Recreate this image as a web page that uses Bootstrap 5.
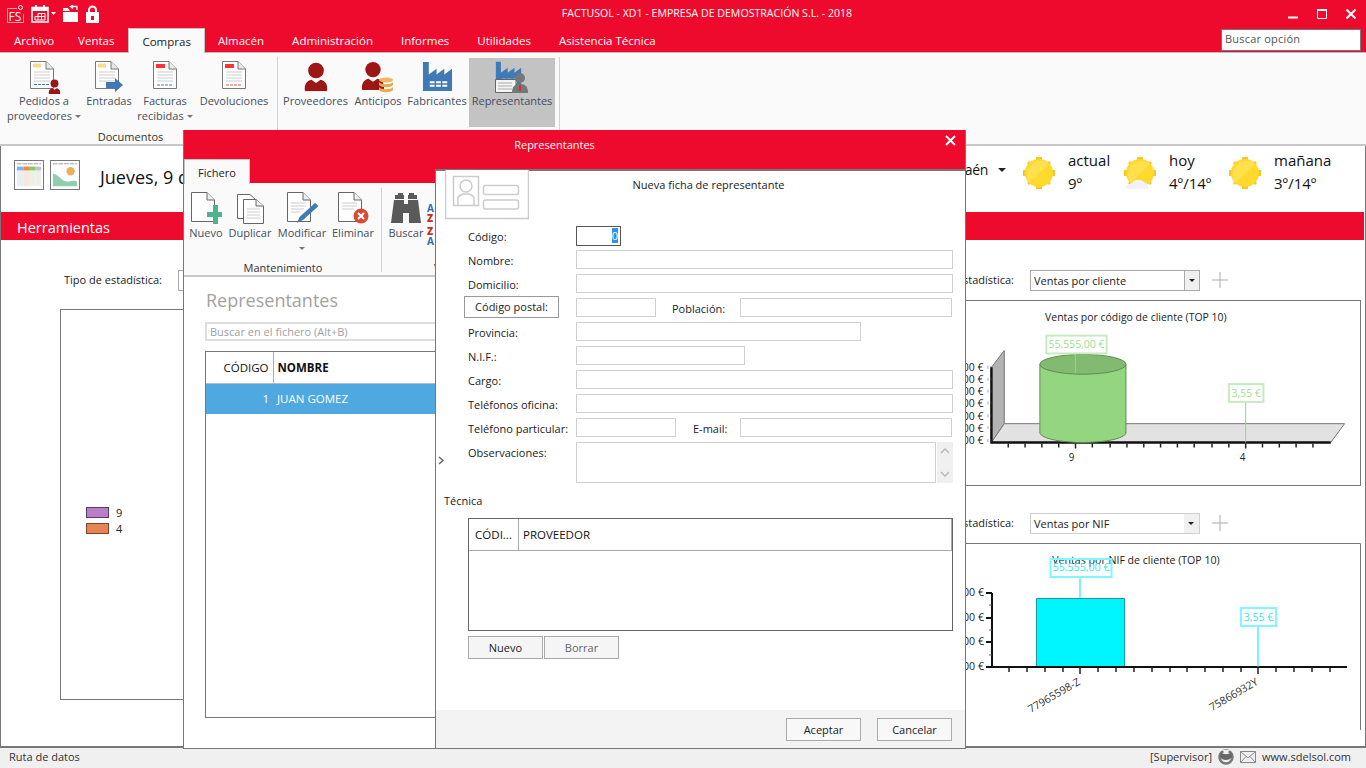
<!DOCTYPE html>
<html lang="es">
<head>
  <meta charset="UTF-8">
  <title>FACTUSOL</title>
  <link href="https://cdn.jsdelivr.net/npm/bootstrap@5.3.0/dist/css/bootstrap.min.css" rel="stylesheet">
  <style>
    html, body { width: 1366px; height: 768px; overflow: hidden; }
    body { font-family: "Open Sans", "Noto Sans", sans-serif; font-size: 11px; color: #222; background: #fff; position: relative; }
    /* title bar and tabs */
    .app-red { background: #ee0a2c; color: #fff; }
    .title-row { height: 28px; }
    .title-left { width: 200px; padding: 5px 0 0 7px; gap: 7px; }
    .title-right { width: 152px; padding-right: 10px; gap: 19px; }
    .title-text { font-size: 10.6px; }
    .tab-row { height: 25px; border-bottom: 1px solid #bdbdbd; }
    .tab-item { padding: 0 14px; height: 24px; line-height: 26px; font-size: 11.5px; color: #fff; }
    .tab-first { margin-right: -4px; }
    .tab-on { background: #fafafa; color: #222; border: 1px solid #c4c4c4; border-bottom: 0; height: 25px; margin-right: -1px; padding: 0 13px; }
    .quick-find { width: 140px; height: 22px; margin: 1px 5px 0 auto; background: #fff; border: 1px solid #777; color: #555; padding: 1px 3px; line-height: 16px; letter-spacing: .2px; }
    /* ribbon */
    .ribbon { height: 93px; background: #fafafa; border-bottom: 2px solid #c8c8c8; }
    .rb-group { position: relative; height: 90px; padding: 5px 0 0 4px; }
    .rb-group-a { width: 277px; }
    .rb-group-b { width: 283px; padding-left: 2px; border-left: 1px solid #d2d2d2; border-right: 1px solid #d2d2d2; height: 86px; margin-top: 4px; padding-top: 1px; }
    .rb-btn { height: 69px; text-align: center; color: #454e5c; line-height: 15px; }
    .rb-btn svg { display: block; margin: 0 auto; }
    .rb-lbl { text-align: center; font-size: 11px; color: #333; line-height: 14px; }
    .rb-cap { position: absolute; left: 0; right: 0; top: 77px; }
    .rb-sel { background: #c3c3c3; }
    .ico-box { height: 35px; padding-top: 3px; }
    .caret-s { display: inline-block; border: 3px solid transparent; border-top: 3px solid #777; border-bottom: 0; vertical-align: 2px; margin-left: 3px; }
    .w80 { width: 80px; } .w50 { width: 50px; } .w62 { width: 62px; } .w76 { width: 76px; }
    .w71 { width: 71px; } .w54 { width: 54px; } .w64 { width: 64px; } .w86 { width: 86px; }
    .w44 { width: 44px; } .w60 { width: 60px; } .w42 { width: 42px; }
    /* background page */
    .page-body { height: 602px; border: solid #777; border-width: 0 1px 2px 1px; overflow: hidden; background: #fff; }
    .info-row { height: 66px; padding: 14px 10px 0 13px; }
    .thumb { width: 30px; height: 30px; border: 1px solid #777; margin-right: 6px; display: block; }
    .today { font-size: 18px; margin-left: 14px; line-height: 34px; color: #111; }
    .place { font-size: 14px; letter-spacing: -.3px; line-height: 30px; margin: -5px 16px 0 0; color: #111; }
    .caret-b { display: inline-block; border: 4px solid transparent; border-top: 4px solid #222; border-bottom: 0; vertical-align: 3px; margin-left: 10px; }
    .sun-ico { margin-top: -4px; flex: none; }
    .weather-txt { font-size: 15px; line-height: 23px; margin: -11px 0 0 12px; color: #111; }
    .wt-a { width: 55px; } .wt-b { width: 59px; } .wt-c { width: 81px; }
    .band { height: 28px; line-height: 31px; padding-left: 16px; background: #ee0a2c; color: #fff; font-size: 14.5px; margin-right: 1px; }
    .stats { display: grid; grid-template-columns: 640px 661px; padding: 30px 0 0 59px; }
    .combo-row { height: 30px; gap: 16px; justify-content: flex-end; }
    .stat-left .combo-row { justify-content: flex-start; padding-left: 4px; }
    .combo { width: 170px; height: 21px; border: 1px solid #aaa; padding-left: 3px; line-height: 20px; background: #fff; color: #222; }
    .combo-arrow { width: 15px; height: 19px; margin-left: auto; background: #f0f0f0; border-left: 1px solid #aaa; padding: 8px 0 0 4px; line-height: 0; }
    .combo-soft { border-color: #d0d0d0; }
    .combo-soft .combo-arrow { border-left: 0; }
    .stat-lbl { line-height: 20px; }
    .chart-box { border: 1px solid #777; display: block; }
    .chart-l { height: 391px; padding: 195px 0 0 25px; line-height: 16px; margin-top: 9px; }
    .plus-ico { margin: 2px 133px 0 -4px; }
    .sw { display: inline-block; width: 23px; height: 11px; border: 1px solid #5a3a66; background: #b87fc8; margin-right: 7px; vertical-align: -1px; }
    .sw-o { border-color: #7a4528; background: #e58553; }
    .gap-r { height: 27px; }
    /* status bar */
    .status { height: 20px; background: #f0f0f0; padding: 0 15px 2px 9px; line-height: 18px; color: #333; }
    .st-g { margin-left: 6px; }
    /* windows */
    .win-list { position: absolute; left: 183px; top: 130px; width: 783px; height: 619px; background: #fff; border: 1px solid #777; border-top: 0; }
    .win-head { height: 53px; background: #ee0a2c; color: #fff; text-align: center; line-height: 30px; position: relative; padding-right: 40px; }
    .win-x { position: absolute; right: 9px; top: 5px; }
    .sub-tab { position: absolute; left: 0; top: 29px; width: 66px; height: 25px; background: #fafafa; border: 1px solid #c4c4c4; border-bottom: 0; color: #222; line-height: 25px; text-align: center; z-index: 2; }
    .rb-sub { height: 94px; background: #fafafa; border-bottom: 2px solid #c8c8c8; padding-top: 8px; position: relative; }
    .sub-div { width: 1px; height: 84px; background: #d2d2d2; margin: -3px 3px 0 7px; }
    .sub-btn { height: 64px; text-align: center; color: #454e5c; line-height: 15px; }
    .sub-btn svg { display: block; margin: 0 auto 1px; }
    .sub-cap { position: absolute; top: 77px; left: 0; width: 198px; text-align: center; color: #333; }
    .sub-cap2 { position: absolute; top: 77px; left: 250px; color: #333; }
    .az { font-size: 10px; font-weight: 700; line-height: 10px; padding-top: 12px; color: #2f6fb0; }
    .az b { color: #c9301c; display: block; }
    .az-gap { margin-top: 3px; }
    .list-title { font-size: 18px; color: #a2a2a2; margin: 11px 0 0 22px; line-height: 24px; }
    .search-f { margin: 10px 0 0 21px; width: 300px; height: 19px; border: 2px solid #ddd; border-radius: 0; color: #a0a0a8; padding: 0 3px; line-height: 15px; font-size: 11px; }
    .search-f::placeholder { color: #a0a0a8; }
    .grid-wrap { margin: 10px 0 0 21px; width: 300px; height: 367px; border: 1px solid #777; }
    .grid-wrap .table { font-size: 11.5px; margin: 0; }
    .grid-wrap th, .grid-wrap td { padding: 0 4px; height: 31px; vertical-align: middle; border-bottom: 1px solid #bbb; font-weight: 400; color: #111; }
    .grid-wrap th.fw-bold { font-weight: 700; }
    .col-code { width: 67px; text-align: right; border-right: 1px solid #aaa; }
    .row-on td { background: #4fa8e0; color: #fff; border-bottom: 0; box-shadow: none; }
    .win-form { position: absolute; left: 435px; top: 169px; width: 531px; height: 580px; background: #fff; border: 1px solid #777; border-top: 2px solid #777; }
    .id-card { position: absolute; left: 9px; top: -1px; }
    .form-title { text-align: center; padding: 6px 0 0 16px; line-height: 16px; height: 55px; font-size: 11px; color: #222; }
    .f-area { padding-left: 32px; }
    .f-row { height: 24px; align-items: flex-start; }
    .f-row label { width: 108px; padding-top: 3px; color: #222; line-height: 16px; flex: none; }
    .f-row .form-control { height: 19px; border: 1px solid #d0d0d0; border-radius: 0; padding: 0 2px; font-size: 11px; box-shadow: none; }
    .f-row .code-in { width: 45px; border-color: #555; text-align: right; height: 20px; line-height: 18px; }
    .hl { background: #3390e8; color: #fff; }
    .f-w-full { width: 377px; }
    .f-w80 { width: 80px; }
    .f-w285 { width: 285px; }
    .f-w169 { width: 169px; }
    .f-w100 { width: 100px; }
    .f-w212 { width: 212px; }
    .f-lbl2 { padding: 3px 0 0 16px; width: 84px; line-height: 16px; flex: none; }
    .f-lbl3 { padding: 3px 0 0 17px; width: 64px; line-height: 16px; flex: none; }
    .cp-btn { width: 95px; height: 22px; margin: -2px 17px 0 -4px; padding: 0; border: 1px solid #999; border-radius: 0; background: #fff; color: #222; font-size: 11px; line-height: 20px; }
    .f-row .memo { width: 360px; height: 41px; resize: none; flex: none; }
    .memo-bar { width: 16px; height: 41px; background: #f0f0f0; margin-left: 1px; padding: 6px 3px; }
    .memo-row { height: 51px; }
    .sect { padding-left: 8px; line-height: 16px; }
    .grid2 { margin: 9px 0 0 32px; width: 485px; height: 113px; border: 1px solid #666; }
    .grid2-head { height: 32px; border-bottom: 1px solid #aaa; font-size: 11.5px; line-height: 31px; color: #111; border-right: 1px solid #aaa; }
    .g2-a { width: 50px; text-align: center; border-right: 1px solid #aaa; }
    .g2-b { padding-left: 4px; }
    .btn-flat { width: 75px; height: 23px; padding: 0; border: 1px solid #aaa; border-radius: 0; background: #f5f5f5; color: #222; font-size: 11px; line-height: 21px; }
    .btn-flat:disabled { opacity: 1; color: #666; background: #f5f5f5; border-color: #aaa; }
    .sub-btns { margin: 5px 0 0 32px; gap: 1px; }
    .form-foot { position: absolute; left: 0; right: 0; bottom: 0; height: 38px; background: #f3f3f3; padding: 8px 13px 0 0; gap: 16px; justify-content: flex-end; }
    .form-foot .btn-flat { width: 75px; background: #f8f8f8; }
    .side-arrow { position: absolute; left: 2px; top: 285px; }
  </style>
</head>
<body>
  <svg width="0" height="0" class="position-absolute">
    <defs>
      <symbol id="doc-lines" viewBox="0 0 24 28">
        <path d="M.5.5H16L23.5 8V27.5H.5Z" fill="#fff" stroke="#777"/>
        <path d="M16 .5V8H23.5" fill="#e9e9e9" stroke="#777"/>
        <path d="M4 11H20M4 14H20M4 17H20M4 20H20" stroke="#ccc"/>
      </symbol>
      <symbol id="person" viewBox="0 0 26 32">
        <circle cx="13" cy="9.500" r="8.500" fill="#9c1616"/>
        <path d="M1 32C0 24 3 21 8 19.500L13 23L18 19.500C23 21 26 24 25 32Z" fill="#9c1616"/>
      </symbol>
      <symbol id="factory" viewBox="0 0 32 32">
        <path d="M1 1H7V14L15 8V14L23 8V14L31 8V31H1Z" fill="#3f79b6"/>
        <path d="M8 22H13M14.500 22H19.500M21 22H26M8 25.500H13M14.500 25.500H19.500M21 25.500H26" stroke="#fff" stroke-width="2"/>
      </symbol>
      <symbol id="sun" viewBox="0 0 34 34">
        <path d="M14 1H20V5H14ZM14 29H20V33H14ZM1 14H5V20H1ZM29 14H33V20H29Z" fill="#f6c42c"/>
        <path d="M5 7L7 5L10 8L8 10ZM27 5L29 7L26 10L24 8ZM5 27L8 24L10 26L7 29ZM26 24L29 27L27 29L24 26Z" fill="#f6c42c"/>
        <circle cx="17" cy="17" r="14" fill="#ffd92c"/>
        <path d="M7.500 27A14 14 0 0 1 27 7.500Z" fill="#ffe14f"/>
      </symbol>
    </defs>
  </svg>

  <header class="app-red">
    <div class="title-row d-flex align-items-center">
      <div class="title-left d-flex align-self-start align-items-start">
        <svg width="17" height="18" viewBox="0 0 17 18"><path d="M.5 3.500H10M.5 3.500V17.500H16.500V9" fill="none" stroke="#f7a0ad"/><text x="1.500" y="15.500" font-size="12" font-family="Open Sans" fill="#fff">FS</text><circle cx="13.500" cy="2.500" r="2" fill="none" stroke="#fff"/></svg>
        <svg width="25" height="18" viewBox="0 0 25 18"><path d="M1 2.500H17V17H1Z" fill="none" stroke="#fff" stroke-width="1.500"/><path d="M1 2H17V6H1ZM4 0H6V3H4ZM12 0H14V3H12Z" fill="#fff"/><path d="M7 8.500H14V15H4V11.500H14M7 8.500V15M10.500 8.500V15" fill="none" stroke="#fff"/><path d="M20 7H25L22.500 10Z" fill="#fff"/></svg>
        <svg width="16" height="18" viewBox="0 0 16 18"><path d="M0 7H15V17H0ZM0 3H5L7 6H0Z" fill="#fff"/><path d="M14 5V1.500H8M10 0L7.500 1.500L10 3.500" fill="none" stroke="#fff" stroke-width="1.300"/></svg>
        <svg width="13" height="18" viewBox="0 0 13 18"><path d="M3 8V5A3.500 3.500 0 0 1 10 5V8" fill="none" stroke="#fff" stroke-width="2"/><path fill-rule="evenodd" d="M0 7H13V18H0ZM5 11V15H8V11Z" fill="#fff"/></svg>
      </div>
      <div class="title-text flex-fill text-center">FACTUSOL - XD1 - EMPRESA DE DEMOSTRACIÓN S.L. - 2018</div>
      <div class="title-right d-flex justify-content-end align-items-center">
        <svg width="10" height="10" viewBox="0 0 10 10"><path d="M0 8.500H10" stroke="#fff" stroke-width="2"/></svg>
        <svg width="10" height="10" viewBox="0 0 10 10"><path d="M.5 1.500H9.500V9.500H.5Z" fill="none" stroke="#fff"/><path d="M0 1H10" stroke="#fff" stroke-width="2"/></svg>
        <svg width="10" height="10" viewBox="0 0 10 10"><path d="M.5.500L9.500 9.500M9.500.500L.5 9.500" stroke="#fff" stroke-width="2"/></svg>
      </div>
    </div>
    <div class="tab-row d-flex">
      <div class="tab-item tab-first">Archivo</div>
      <div class="tab-item">Ventas</div>
      <div class="tab-item tab-on">Compras</div>
      <div class="tab-item">Almacén</div>
      <div class="tab-item">Administración</div>
      <div class="tab-item">Informes</div>
      <div class="tab-item">Utilidades</div>
      <div class="tab-item">Asistencia Técnica</div>
      <div class="quick-find">Buscar opción</div>
    </div>
  </header>

  <section class="ribbon d-flex">
    <div class="rb-group rb-group-a d-flex">
      <div class="rb-btn w80">
        <div class="ico-box">
          <svg width="34" height="33" viewBox="-3 0 34 33"><use href="#doc-lines" width="24" height="28" x="0" y="0"/><path d="M3 2.500H11V6.500H3Z" fill="#fcd88c"/><path d="M4 23.500H20" stroke="#3f79b6" stroke-dasharray="3 1"/><use href="#person" x="18" y="18" width="13" height="15"/></svg>
        </div>
        Pedidos a<br>proveedores<span class="caret-s"></span>
      </div>
      <div class="rb-btn w50">
        <div class="ico-box">
          <svg width="28" height="33" viewBox="0 0 28 33"><use href="#doc-lines" width="24" height="28" x="0" y="0"/><path d="M3 2.500H11V6.500H3Z" fill="#fcd88c"/><path d="M11 21H20V17L28 24L20 31V27H11Z" fill="#3f79b6"/></svg>
        </div>
        Entradas
      </div>
      <div class="rb-btn w62">
        <div class="ico-box">
          <svg width="24" height="28" viewBox="0 0 24 28"><use href="#doc-lines" width="24" height="28"/><path d="M3 3H12V7H3Z" fill="#f33"/><path d="M4 24H20" stroke="#3f79b6" stroke-dasharray="3 1"/></svg>
        </div>
        Facturas<br>recibidas<span class="caret-s"></span>
      </div>
      <div class="rb-btn w76">
        <div class="ico-box">
          <svg width="24" height="28" viewBox="0 0 24 28"><use href="#doc-lines" width="24" height="28"/><path d="M3 3H12V7H3Z" fill="#f33"/><path d="M4 24H20" stroke="#e55" stroke-dasharray="3 1"/></svg>
        </div>
        Devoluciones
      </div>
      <div class="rb-lbl rb-cap pe-3">Documentos</div>
    </div>
    <div class="rb-group rb-group-b d-flex">
      <div class="rb-btn w71">
        <div class="ico-box"><svg width="24" height="31" viewBox="0 0 26 32"><use href="#person" width="26" height="32"/></svg></div>
        Proveedores
      </div>
      <div class="rb-btn w54">
        <div class="ico-box">
          <svg width="34" height="33" viewBox="0 0 34 33"><use href="#person" width="24" height="29"/><ellipse cx="25" cy="19" rx="7" ry="2.500" fill="#efb765"/><path d="M18 21C20 24 30 24 32 21V24C30 27 20 27 18 24ZM18 26C20 29 30 29 32 26V29C30 32 20 32 18 29Z" fill="#e8a94f"/></svg>
        </div>
        Anticipos
      </div>
      <div class="rb-btn w64">
        <div class="ico-box"><svg width="31" height="31" viewBox="0 0 32 32"><use href="#factory" width="32" height="32"/></svg></div>
        Fabricantes
      </div>
      <div class="rb-btn w86 rb-sel">
        <div class="ico-box">
          <svg width="34" height="33" viewBox="0 0 34 33"><use href="#factory" width="27" height="27" x="0" y="0"/><path d="M.5 18.500H21V31.500H.5Z" fill="#f4f4f4" stroke="#666"/><path d="M3 22H17M3 25H17M3 28H17" stroke="#aaa"/><circle cx="25" cy="17" r="5" fill="#777"/><path d="M17 32C17 25 20 23 25 23S33 25 33 32Z" fill="#777"/><path d="M25 24V30" stroke="#c33" stroke-width="2"/></svg>
        </div>
        Representantes
      </div>
    </div>
  </section>

  <main class="page-body">
    <div class="info-row d-flex align-items-start">
      <svg class="thumb" viewBox="0 0 30 30"><rect width="30" height="30" fill="#fff"/><path d="M2 3H28" stroke="#999" stroke-dasharray="5 1"/><path d="M2 6H9V27H2Z" fill="#e8eef3"/><path d="M9 6H16V27H9Z" fill="#f6e8dc"/><path d="M16 6H22V27H16Z" fill="#e9f2e4"/><path d="M22 6H28V27H22Z" fill="#eee"/><path d="M2 6H9V10H2Z" fill="#7bb7ee"/><path d="M9 6H16V10H9Z" fill="#f58a3c"/><path d="M16 6H22V10H16Z" fill="#8cc66a"/><path d="M22 6H28V10H22Z" fill="#c4c4c4"/></svg>
      <svg class="thumb" viewBox="0 0 30 30"><rect width="30" height="30" fill="#fff"/><path d="M2 3H28" stroke="#999" stroke-dasharray="5 1"/><circle cx="21" cy="11" r="4.500" fill="#e8b060"/><path d="M2 14C8 13 11 23 19 22C24 21 26 21 28 22V27H2Z" fill="#8fcdb0"/></svg>
      <div class="today">Jueves, 9 de febrero</div>
      <div class="place ms-auto">Jaén<span class="caret-b"></span></div>
      <svg class="sun-ico" width="34" height="34"><use href="#sun" width="34" height="34"/></svg>
      <div class="weather-txt wt-a">actual<br>9º</div>
      <svg class="sun-ico" width="34" height="34" viewBox="0 0 34 34"><use href="#sun" width="34" height="34"/><path d="M3 33C3 28 8 28 10 26C13 22 21 24 22 27C25 27 26 30 25 33Z" fill="#f2f2f8"/></svg>
      <div class="weather-txt wt-b">hoy<br>4º/14º</div>
      <svg class="sun-ico" width="34" height="34"><use href="#sun" width="34" height="34"/></svg>
      <div class="weather-txt wt-c">mañana<br>3º/14º</div>
    </div>
    <div class="band">Herramientas</div>
    <div class="stats">
      <div class="stat-left">
        <div class="combo-row d-flex align-items-start">
          <span class="stat-lbl">Tipo de estadística:</span>
          <div class="combo"></div>
        </div>
        <div class="chart-box chart-l">
          <div><span class="sw"></span>9</div>
          <div><span class="sw sw-o"></span>4</div>
        </div>
      </div>
      <div class="stat-right">
        <div class="combo-row d-flex align-items-start">
          <span class="stat-lbl">Tipo de estadística:</span>
          <div class="combo d-flex"><span>Ventas por cliente</span><span class="combo-arrow"><svg width="6" height="3"><path d="M0 0H6L3 3Z" fill="#222"/></svg></span></div>
          <svg class="plus-ico" width="16" height="16" viewBox="0 0 16 16"><path d="M8 0V16M0 8H16" stroke="#aaa"/></svg>
        </div>
        <svg class="chart-box" width="661" height="186" viewBox="700 300 661 186" font-family="Open Sans" font-size="10.6">
          <text x="1137" y="320" text-anchor="middle" fill="#222">Ventas por código de cliente (TOP 10)</text>
          <path d="M991 367L1004 350V424L991 443Z" fill="#b3b3b3" stroke="#777"/>
          <path d="M991 443L1004 424H1348L1334 443Z" fill="#e2e2e2" stroke="#777"/>
          <path d="M991 367V444M990 443H1334" stroke="#111" stroke-width="2.500" fill="none"/>
          <path d="M1008 444V448M1025 444V448M1042 444V448M1059 444V448M1076 444V449M1093 444V448M1111 444V448M1128 444V448M1145 444V448M1162 444V448M1179 444V448M1196 444V448M1214 444V448M1231 444V448M1248 444V449M1265 444V448M1282 444V448M1299 444V448M1316 444V448" stroke="#222" stroke-width="1.500"/>
          <path d="M987 367H991M987 379H991M987 391H991M987 403H991M987 416H991M987 428H991M987 441H991" stroke="#555" stroke-dasharray="1 2" stroke-width="3" opacity=".5"/>
          <path d="M1040 364V434C1048 446 1119 446 1127 434V364Z" fill="#93d67f" stroke="#5d8b55"/>
          <ellipse cx="1083.500" cy="364" rx="43.500" ry="10" fill="#82ba70" stroke="#5d8b55"/>
          <path d="M1076 353V373M1248 402V443" stroke="#93d67f"/>
          <rect x="1046.500" y="335" width="61" height="18" fill="#fff" stroke="#c8eabf" stroke-width="2"/>
          <text x="1077" y="348" text-anchor="middle" fill="#a2dd90">55.555,00 €</text>
          <rect x="1231" y="384" width="35" height="18" fill="#fff" stroke="#c8eabf" stroke-width="2"/>
          <text x="1248.500" y="397" text-anchor="middle" fill="#a2dd90">3,55 €</text>
          <g text-anchor="end" fill="#222">
            <text x="983" y="371">60.000,00 €</text><text x="983" y="383">50.000,00 €</text><text x="983" y="395">40.000,00 €</text><text x="983" y="407">30.000,00 €</text><text x="983" y="420">20.000,00 €</text><text x="983" y="432">10.000,00 €</text><text x="983" y="445">0,00 €</text>
          </g>
          <text x="1072" y="462" text-anchor="middle" fill="#222" font-size="10">9</text>
          <text x="1245" y="462" text-anchor="middle" fill="#222" font-size="10">4</text>
        </svg>
        <div class="gap-r"></div>
        <div class="combo-row d-flex align-items-start">
          <span class="stat-lbl">Tipo de estadística:</span>
          <div class="combo combo-soft d-flex"><span>Ventas por NIF</span><span class="combo-arrow"><svg width="6" height="3"><path d="M0 0H6L3 3Z" fill="#222"/></svg></span></div>
          <svg class="plus-ico" width="16" height="16" viewBox="0 0 16 16"><path d="M8 0V16M0 8H16" stroke="#aaa"/></svg>
        </div>
        <svg width="661" height="205" viewBox="700 543 661 205" font-family="Open Sans" font-size="10.6">
          <path d="M700.500 748V543.500H1360.500V730" fill="none" stroke="#777"/>
          <text x="1136" y="564" text-anchor="middle" fill="#222">Ventas por NIF de cliente (TOP 10)</text>
          <path d="M1036.500 598.500H1124.500V667H1036.500Z" fill="#00f6ff" stroke="#1a9aa5"/>
          <path d="M1213 666.500H1302" stroke="#1a9aa5"/>
          <path d="M992 593V667M986 593H992M986 618H992M986 642H992M986 667H992M992 667H1347" stroke="#111" stroke-width="2" fill="none"/>
          <path d="M989 605H992M989 630H992M989 655H992" stroke="#555"/>
          <path d="M1009 668V672M1027 668V672M1045 668V672M1063 668V672M1080 668V674M1098 668V672M1116 668V672M1134 668V672M1152 668V672M1170 668V672M1187 668V672M1205 668V672M1223 668V672M1241 668V672M1258 668V674M1276 668V672M1294 668V672M1312 668V672M1330 668V672" stroke="#222" stroke-width="1.500"/>
          <path d="M1080 577V598M1258 626V667" stroke="#00e8f2"/>
          <rect x="1050.500" y="559" width="61" height="18" fill="none" stroke="#7ff9ff" stroke-width="2"/>
          <text x="1081" y="571" text-anchor="middle" fill="#33e8f4">55.555,00 €</text>
          <rect x="1241" y="608" width="35" height="18" fill="#fff" stroke="#7ff9ff" stroke-width="2"/>
          <text x="1258.500" y="621" text-anchor="middle" fill="#33e8f4">3,55 €</text>
          <g text-anchor="end" fill="#222">
            <text x="984" y="596">60.000,00 €</text><text x="984" y="621">40.000,00 €</text><text x="984" y="645">20.000,00 €</text><text x="984" y="670">1.000,00 €</text>
          </g>
          <text transform="translate(1081 684) rotate(-30)" text-anchor="end" fill="#333">77965598-Z</text>
          <text transform="translate(1259 684) rotate(-30)" text-anchor="end" fill="#333">75866932Y</text>
        </svg>
      </div>
    </div>
  </main>

  <footer class="status d-flex align-items-center">
    <span>Ruta de datos</span>
    <span class="ms-auto">[Supervisor]</span>
    <svg class="st-g" width="16" height="16" viewBox="0 0 16 16"><circle cx="8" cy="8" r="6.500" fill="none" stroke="#777" stroke-width="2.500"/><path d="M3 3C5 6 11 6 13 3L14 8C12 12 4 12 2 8Z" fill="#666"/><path d="M4 1H12L8 5Z" fill="#f0f0f0"/></svg>
    <svg class="st-g" width="16" height="12" viewBox="0 0 16 12"><path d="M.5.500H15.500V11.500H.5ZM.5.500L8 7L15.500.500M.5 11.500L6 5.500M15.500 11.500L10 5.500" fill="none" stroke="#888"/></svg>
    <span class="st-g">www.sdelsol.com</span>
  </footer>

  <div class="win-list">
    <div class="win-head">
      Representantes
      <svg class="win-x" width="11" height="11" viewBox="0 0 11 11"><path d="M1 1L10 10M10 1L1 10" stroke="#fff" stroke-width="2"/></svg>
      <div class="sub-tab">Fichero</div>
    </div>
    <div class="rb-sub d-flex">
      <div class="sub-btn w44">
        <svg width="34" height="33" viewBox="0 0 34 33"><path d="M2.500 1.500H18L25.500 9V30.500H2.500Z" fill="#fff" stroke="#666"/><path d="M18 1.500V9H25.500" fill="#eee" stroke="#666"/><path d="M24 14H29V21H33V26H29V33H24V26H18V21H24Z" fill="#4fb38b"/></svg>
        Nuevo
      </div>
      <div class="sub-btn w44">
        <svg width="28" height="33" viewBox="0 0 28 33"><path d="M1.500 3.500H14L19 8V27.500H1.500Z" fill="#fff" stroke="#666"/><path d="M7.500 8.500H20L27.500 15V32.500H7.500Z" fill="#fff" stroke="#666"/><path d="M20 8.500V15H27.500" fill="#eee" stroke="#666"/><path d="M11 18H24M11 21H24M11 24H24M11 27H24" stroke="#ccc"/></svg>
        Duplicar
      </div>
      <div class="sub-btn w60">
        <svg width="34" height="33" viewBox="0 0 34 33"><path d="M2.500 1.500H18L25.500 9V30.500H2.500Z" fill="#fff" stroke="#666"/><path d="M18 1.500V9H25.500" fill="#eee" stroke="#666"/><path d="M6 12H21M6 15H21M6 18H19M6 21H15" stroke="#ccc"/><path d="M30 12L33.500 15L18 29L12 32L14.500 26Z" fill="#3f79b6"/></svg>
        Modificar<br><span class="caret-s m-0"></span>
      </div>
      <div class="sub-btn w42">
        <svg width="34" height="33" viewBox="0 0 34 33"><path d="M2.500 1.500H18L25.500 9V30.500H2.500Z" fill="#fff" stroke="#666"/><path d="M18 1.500V9H25.500" fill="#eee" stroke="#666"/><path d="M6 12H21M6 15H21M6 18H18" stroke="#ccc"/><circle cx="25" cy="25" r="7.500" fill="#d84a33"/><path d="M22 22L28 28M28 22L22 28" stroke="#fff" stroke-width="2"/></svg>
        Eliminar
      </div>
      <div class="sub-div"></div>
      <div class="sub-btn w42">
        <svg width="32" height="33" viewBox="0 0 32 33"><path d="M5 4H14V8H5ZM18 4H27V8H18ZM4 9H14V13H18V9H28L31 32H19V22H13V32H1Z" fill="#5a5a5a"/><path d="M8 2H13V4H8ZM19 2H24V4H19Z" fill="#5a5a5a"/></svg>
        Buscar
      </div>
      <div class="az">A<b>Z</b><b class="az-gap">Z</b>A</div>
      <div class="sub-cap">Mantenimiento</div>
      <div class="sub-cap2">Ver</div>
    </div>
    <div class="list-title">Representantes</div>
    <input class="form-control search-f" placeholder="Buscar en el fichero (Alt+B)">
    <div class="grid-wrap">
      <table class="table">
        <thead><tr><th class="col-code">CÓDIGO</th><th class="fw-bold">NOMBRE</th></tr></thead>
        <tbody><tr class="row-on"><td class="col-code border-0">1</td><td>JUAN GOMEZ</td></tr></tbody>
      </table>
    </div>
  </div>

  <div class="win-form">
    <svg class="id-card" width="84" height="50" viewBox="0 0 84 50"><path d="M.5 0V48.500H83.500V0" fill="#fff" stroke="#ccc" stroke-width="1.500"/><path d="M8.500 6.500H33.500V35.500H8.500Z" fill="none" stroke="#ccc" stroke-width="1.500"/><circle cx="21" cy="16" r="6" fill="none" stroke="#ccc" stroke-width="1.500"/><path d="M13 35V28C13 25 17 25 18 24H24C25 25 29 25 29 28V35" fill="none" stroke="#ccc" stroke-width="1.500"/><rect x="38.500" y="15.500" width="35" height="9" rx="2" fill="none" stroke="#ccc" stroke-width="1.500"/><rect x="38.500" y="30" width="35" height="9" rx="2" fill="none" stroke="#ccc" stroke-width="1.500"/></svg>
    <div class="form-title">Nueva ficha de representante</div>
    <div class="f-area">
      <div class="f-row d-flex"><label>Código:</label><div class="form-control code-in"><span class="hl">0</span></div></div>
      <div class="f-row d-flex"><label>Nombre:</label><input class="form-control f-w-full"></div>
      <div class="f-row d-flex"><label>Domicilio:</label><input class="form-control f-w-full"></div>
      <div class="f-row d-flex"><button class="btn cp-btn" type="button">Código postal:</button><input class="form-control f-w80"><span class="f-lbl2">Población:</span><input class="form-control f-w212"></div>
      <div class="f-row d-flex"><label>Provincia:</label><input class="form-control f-w285"></div>
      <div class="f-row d-flex"><label>N.I.F.:</label><input class="form-control f-w169"></div>
      <div class="f-row d-flex"><label>Cargo:</label><input class="form-control f-w-full"></div>
      <div class="f-row d-flex"><label>Teléfonos oficina:</label><input class="form-control f-w-full"></div>
      <div class="f-row d-flex"><label>Teléfono particular:</label><input class="form-control f-w100"><span class="f-lbl3">E-mail:</span><input class="form-control f-w212"></div>
      <div class="f-row memo-row d-flex"><label>Observaciones:</label><textarea class="form-control memo"></textarea>
        <div class="memo-bar d-flex flex-column justify-content-between"><svg width="10" height="6"><path d="M1 5L5 1L9 5" fill="none" stroke="#bbb" stroke-width="1.500"/></svg><svg width="10" height="6"><path d="M1 1L5 5L9 1" fill="none" stroke="#bbb" stroke-width="1.500"/></svg></div>
      </div>
    </div>
    <svg class="side-arrow" width="8" height="9" viewBox="0 0 8 9"><path d="M1 1L5 4.500L1 8" fill="none" stroke="#666" stroke-width="1.500"/></svg>
    <div class="sect">Técnica</div>
    <div class="grid2">
      <div class="grid2-head d-flex"><div class="g2-a">CÓDI...</div><div class="g2-b">PROVEEDOR</div></div>
    </div>
    <div class="sub-btns d-flex">
      <button class="btn btn-flat" type="button">Nuevo</button>
      <button class="btn btn-flat" type="button" disabled>Borrar</button>
    </div>
    <div class="form-foot d-flex">
      <button class="btn btn-flat" type="button">Aceptar</button>
      <button class="btn btn-flat" type="button">Cancelar</button>
    </div>
  </div>
</body>
</html>
